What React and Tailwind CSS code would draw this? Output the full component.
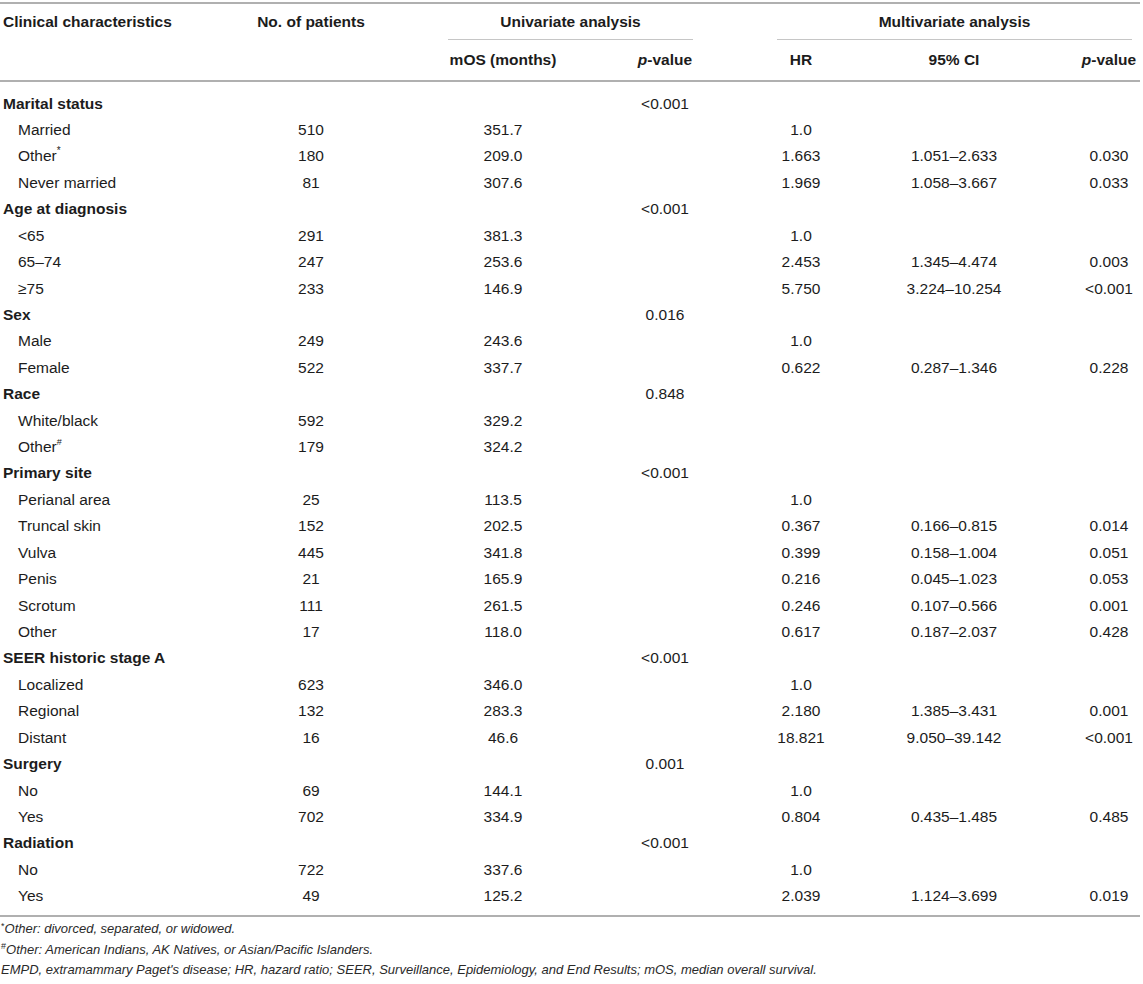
import React from 'react';

const cols = 'grid grid-cols-[174px_274px_110px_214px_58px_248px_62px]';

const groups = [
    {
        title: 'Marital status', p: '<0.001', rows: [
            ['Married', '510', '351.7', '1.0', '', ''],
            [<>Other<sup className="text-[10px]">*</sup></>, '180', '209.0', '1.663', '1.051–2.633', '0.030'],
            ['Never married', '81', '307.6', '1.969', '1.058–3.667', '0.033'],
        ]
    },
    {
        title: 'Age at diagnosis', p: '<0.001', rows: [
            ['<65', '291', '381.3', '1.0', '', ''],
            ['65–74', '247', '253.6', '2.453', '1.345–4.474', '0.003'],
            ['≥75', '233', '146.9', '5.750', '3.224–10.254', '<0.001'],
        ]
    },
    {
        title: 'Sex', p: '0.016', rows: [
            ['Male', '249', '243.6', '1.0', '', ''],
            ['Female', '522', '337.7', '0.622', '0.287–1.346', '0.228'],
        ]
    },
    {
        title: 'Race', p: '0.848', rows: [
            ['White/black', '592', '329.2', '', '', ''],
            [<>Other<sup className="text-[9px]">#</sup></>, '179', '324.2', '', '', ''],
        ]
    },
    {
        title: 'Primary site', p: '<0.001', rows: [
            ['Perianal area', '25', '113.5', '1.0', '', ''],
            ['Truncal skin', '152', '202.5', '0.367', '0.166–0.815', '0.014'],
            ['Vulva', '445', '341.8', '0.399', '0.158–1.004', '0.051'],
            ['Penis', '21', '165.9', '0.216', '0.045–1.023', '0.053'],
            ['Scrotum', '111', '261.5', '0.246', '0.107–0.566', '0.001'],
            ['Other', '17', '118.0', '0.617', '0.187–2.037', '0.428'],
        ]
    },
    {
        title: 'SEER historic stage A', p: '<0.001', rows: [
            ['Localized', '623', '346.0', '1.0', '', ''],
            ['Regional', '132', '283.3', '2.180', '1.385–3.431', '0.001'],
            ['Distant', '16', '46.6', '18.821', '9.050–39.142', '<0.001'],
        ]
    },
    {
        title: 'Surgery', p: '0.001', rows: [
            ['No', '69', '144.1', '1.0', '', ''],
            ['Yes', '702', '334.9', '0.804', '0.435–1.485', '0.485'],
        ]
    },
    {
        title: 'Radiation', p: '<0.001', rows: [
            ['No', '722', '337.6', '1.0', '', ''],
            ['Yes', '49', '125.2', '2.039', '1.124–3.699', '0.019'],
        ]
    },
];

const Cell = ({ children }) => (
    <div className="flex items-center justify-center whitespace-nowrap">{children}</div>
);

const App = () => {
    return (
        <div
            className="w-[1143px] min-h-screen bg-white pt-[2px] text-[#1c1c1c]"
            style={{ fontFamily: '"Liberation Sans", Arial, sans-serif' }}
        >
            <div className="w-[1140px] text-[15.5px]">
                {/* Top rule */}
                <div className="h-[2px] bg-[#b0b0b0]" />

                {/* Header row 1 */}
                <div className={`${cols} h-[36px] font-bold`}>
                    <div className="flex items-center pl-[3px] whitespace-nowrap">Clinical characteristics</div>
                    <Cell>No. of patients</Cell>
                    <div className="col-span-2 mr-[79px] flex items-center justify-center border-b border-[#c6c6c6]">
                        Univariate analysis
                    </div>
                    <div className="col-span-3 ml-[5px] mr-[8px] flex items-center justify-center border-b border-[#c6c6c6]">
                        Multivariate analysis
                    </div>
                </div>

                {/* Header row 2 */}
                <div className={`${cols} h-[40px] font-bold`}>
                    <div />
                    <div />
                    <Cell>mOS (months)</Cell>
                    <Cell><span className="italic">p</span>-value</Cell>
                    <Cell>HR</Cell>
                    <Cell>95% CI</Cell>
                    <Cell><span className="italic">p</span>-value</Cell>
                </div>

                <div className="h-[2px] bg-[#b0b0b0]" />

                {/* Body */}
                <div className="pt-[8px] pb-[6px]">
                    {groups.map((g) => (
                        <React.Fragment key={g.title}>
                            <div className={`${cols} h-[26.43px]`}>
                                <div className="flex items-center pl-[3px] font-bold whitespace-nowrap">{g.title}</div>
                                <div />
                                <div />
                                <Cell>{g.p}</Cell>
                                <div />
                                <div />
                                <div />
                            </div>
                            {g.rows.map((r, i) => (
                                <div key={i} className={`${cols} h-[26.43px]`}>
                                    <div className="flex items-center pl-[18px] whitespace-nowrap">{r[0]}</div>
                                    <Cell>{r[1]}</Cell>
                                    <Cell>{r[2]}</Cell>
                                    <div />
                                    <Cell>{r[3]}</Cell>
                                    <Cell>{r[4]}</Cell>
                                    <Cell>{r[5]}</Cell>
                                </div>
                            ))}
                        </React.Fragment>
                    ))}
                </div>

                <div className="h-[2px] bg-[#b0b0b0]" />

                {/* Footnotes */}
                <div className="pt-[2px] pl-[1px] text-[13px] leading-[20.5px] italic text-[#2a2a2a]">
                    <p><sup className="text-[9px] not-italic">*</sup>Other: divorced, separated, or widowed.</p>
                    <p><sup className="text-[9px] not-italic">#</sup>Other: American Indians, AK Natives, or Asian/Pacific Islanders.</p>
                    <p>EMPD, extramammary Paget's disease; HR, hazard ratio; SEER, Surveillance, Epidemiology, and End Results; mOS, median overall survival.</p>
                </div>
            </div>
        </div>
    );
};

export default App;
